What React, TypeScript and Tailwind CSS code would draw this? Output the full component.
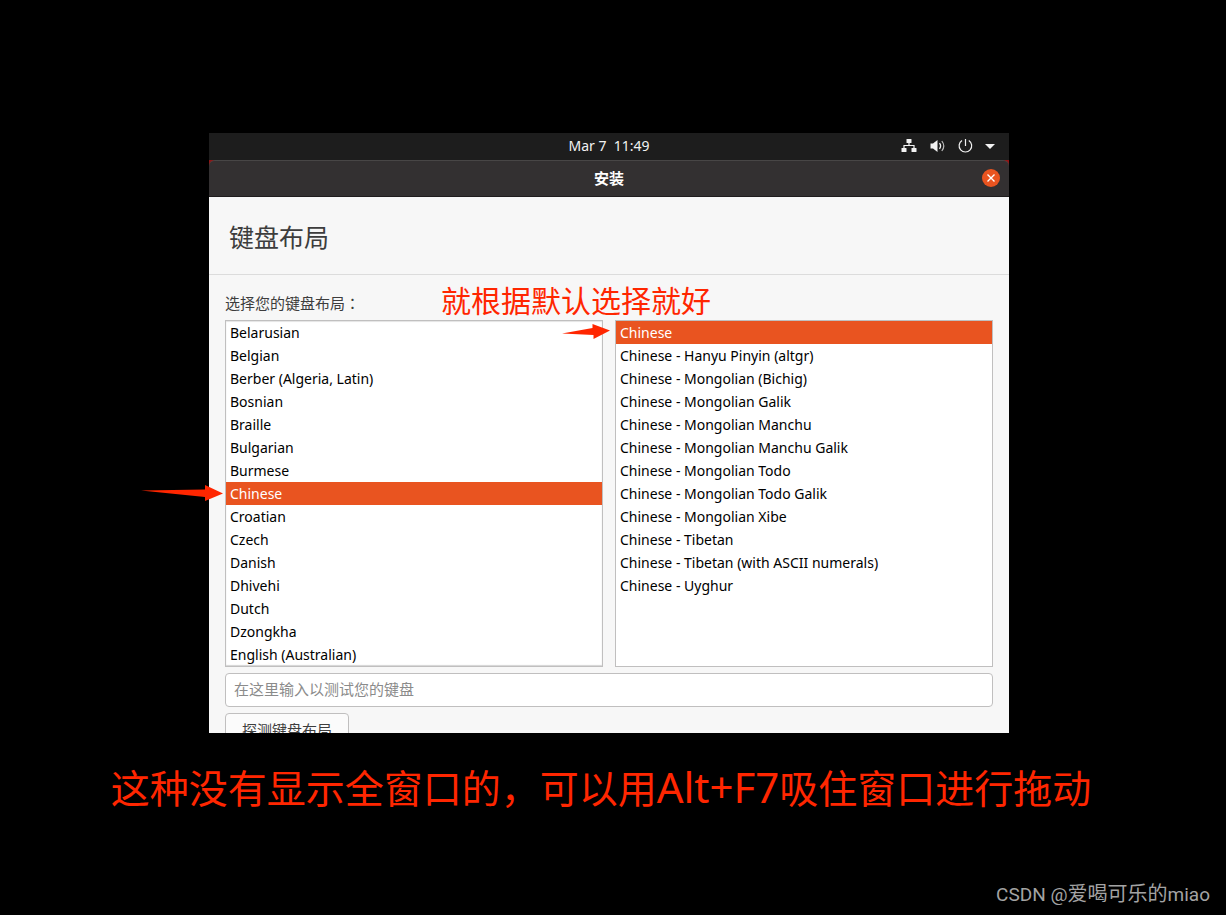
import clsx from "clsx";

const languages = [
  "Belarusian",
  "Belgian",
  "Berber (Algeria, Latin)",
  "Bosnian",
  "Braille",
  "Bulgarian",
  "Burmese",
  "Chinese",
  "Croatian",
  "Czech",
  "Danish",
  "Dhivehi",
  "Dutch",
  "Dzongkha",
  "English (Australian)",
];

const variants = [
  "Chinese",
  "Chinese - Hanyu Pinyin (altgr)",
  "Chinese - Mongolian (Bichig)",
  "Chinese - Mongolian Galik",
  "Chinese - Mongolian Manchu",
  "Chinese - Mongolian Manchu Galik",
  "Chinese - Mongolian Todo",
  "Chinese - Mongolian Todo Galik",
  "Chinese - Mongolian Xibe",
  "Chinese - Tibetan",
  "Chinese - Tibetan (with ASCII numerals)",
  "Chinese - Uyghur",
];

function ListBox({ id, label, items, scrolled }: { id: string; label: string; items: string[]; scrolled?: boolean }) {
  return (
    <select
      id={id}
      aria-label={label}
      size={15}
      defaultValue="Chinese"
      className={clsx(
        "block h-[347px] min-w-0 flex-1 appearance-none overflow-hidden border border-[#c0bfbf] bg-white p-0 text-sm text-black outline-none",
        scrolled && "shadow-[inset_0_1px_1px_#e4e4e4,inset_0_-1px_1px_#d4d4d4]"
      )}
    >
      {items.map((item) => (
        <option
          key={item}
          value={item}
          className="h-[23px] px-1 pt-0.5 pb-0 checked:bg-[linear-gradient(#e95420,#e95420)] checked:[-webkit-text-fill-color:#fff]"
        >
          {item}
        </option>
      ))}
    </select>
  );
}

function TopBar() {
  return (
    <header className="grid h-[27px] grid-cols-[1fr_auto_1fr] items-center bg-[#1d1d1d] px-[14px] pb-0.5 text-[#f2f2f2]">
      <span />
      <time className="text-sm leading-5 whitespace-pre">Mar 7  11:49</time>
      <div className="flex items-center justify-end gap-3">
        <svg className="h-4 w-4" viewBox="0 0 16 16" fill="currentColor" aria-label="网络">
          <rect x="5.500" y="1" width="5" height="4" rx=".6" />
          <rect x="0.500" y="10" width="5" height="4" rx=".6" />
          <rect x="10.500" y="10" width="5" height="4" rx=".6" />
          <path d="M8 5v2.500M3 10V7.500h10V10" fill="none" stroke="currentColor" strokeWidth="1.200" />
        </svg>
        <svg className="h-4 w-4" viewBox="0 0 16 16" fill="currentColor" aria-label="音量">
          <path d="M1.500 5.500H4L8.500 2v12L4 10.500H1.500z" />
          <path d="M10.500 5.200q2.200 2.800 0 5.600" fill="none" stroke="currentColor" strokeWidth="1.300" />
          <path d="M12.800 3q4 5 0 10" fill="none" stroke="currentColor" strokeWidth="1.200" opacity=".75" />
        </svg>
        <svg className="h-4 w-4" viewBox="0 0 16 16" fill="none" stroke="currentColor" strokeWidth="1.200" aria-label="电源">
          <path d="M5 2.400a6.300 6.300 0 1 0 6.800 0" />
          <path d="M8.500 1v7" />
        </svg>
        <svg className="h-4 w-[10px]" viewBox="0 0 10 16" fill="currentColor" aria-hidden="true">
          <path d="M0 6h10L5 11z" />
        </svg>
      </div>
    </header>
  );
}

function TitleBar() {
  return (
    <div className="bg-[#8f1616]">
      <div className="grid h-[37px] grid-cols-[1fr_auto_1fr] items-center rounded-t-[6px] border-t border-b border-t-[#484646] border-b-[#1f1c1d] bg-[#333031] px-[9px] pb-0.5 text-white">
        <span />
        <h1 className="text-[15px] leading-5 font-bold">安装</h1>
        <button
          type="button"
          aria-label="关闭"
          className="flex h-[18px] w-[18px] items-center justify-center justify-self-end rounded-full bg-[#e95420]"
        >
          <svg className="h-2 w-2" viewBox="0 0 8 8" fill="none" stroke="white" strokeWidth="1.400">
            <path d="M.5.5l7 7M7.500.5l-7 7" />
          </svg>
        </button>
      </div>
    </div>
  );
}

function Installer() {
  return (
    <section className="w-full max-w-[800px] bg-[#f7f7f7] text-[#3d3d3d]">
      <TopBar />
      <TitleBar />
      <h2 className="border-b border-[#dcdcdc] px-5 pt-[22px] pb-[19px] text-[25px] leading-9">键盘布局</h2>
      <form className="px-4">
        <div className="relative pt-[18px]">
          <label htmlFor="layout" className="block pb-[7px] text-[15px] leading-5">
            选择您的键盘布局<span className="font-['Noto_Sans_CJK_TC',sans-serif]">：</span>
          </label>
          <p className="absolute top-[6px] left-[216px] text-[30px] leading-10 whitespace-nowrap text-[#ff2600]">
            就根据默认选择就好
          </p>
        </div>
        <div className="relative flex gap-3">
          <ListBox id="layout" label="键盘布局" items={languages} scrolled />
          <ListBox id="variant" label="键盘布局变体" items={variants} />
          <svg className="absolute top-[164px] -left-[84px] h-[18px] w-[82px]" viewBox="0 0 82 18" fill="#ff2600" aria-hidden="true">
            <path d="M0 6.500L64 5.500V1L82 9.500L64 17v-4z" />
          </svg>
          <svg className="absolute top-1 left-[337px] h-4 w-12" viewBox="0 0 48 16" fill="#ff2600" aria-hidden="true">
            <path d="M0 9.500L30.500 4V0L48 6.500L31.500 15v-4z" />
          </svg>
        </div>
        <input
          type="text"
          aria-label="测试键盘"
          placeholder="在这里输入以测试您的键盘"
          className="mt-[6px] block h-[34px] w-full rounded-[4px] border border-[#c0bfbf] bg-white px-2 pb-0.5 text-[15px] leading-5 outline-none placeholder:text-[#8b8b8b]"
        />
        {/* the window runs past the bottom of the 800x600 screen */}
        <div className="mt-[6px] h-5 overflow-hidden">
          <button type="button" className="h-[34px] rounded-[4px] border border-[#c0bfbf] bg-[#fbfbfb] px-4 text-[15px] leading-5">
            探测键盘布局
          </button>
        </div>
      </form>
    </section>
  );
}

export default function App() {
  return (
    <main className="flex min-h-screen flex-col bg-black font-['Noto_Sans','Noto_Sans_CJK_SC',sans-serif]">
      <div className="flex justify-center pt-[133px] pr-2">
        <Installer />
      </div>
      <p className="pt-6 pr-6 text-center text-[39px] leading-[60px] whitespace-nowrap text-[#ff2600]">
        这种没有显示全窗口的，可以用<span className="text-[42px]">Alt+F7</span>吸住窗口进行拖动
      </p>
      <footer className="mt-auto pr-4 pb-1 text-right font-['Roboto','Noto_Sans_CJK_SC',sans-serif] text-[19px] leading-8 text-[#a3a3a3]">
        CSDN @<span className="text-xl leading-8">爱喝可乐的</span>miao
      </footer>
    </main>
  );
}
